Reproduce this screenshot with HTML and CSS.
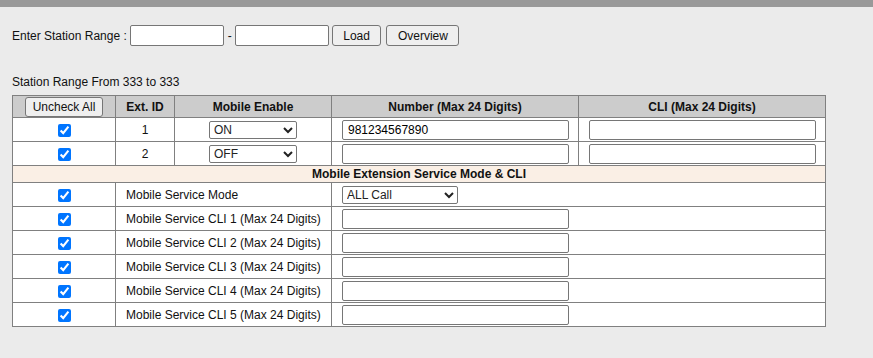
FILE: index.html
```html
<!DOCTYPE html>
<html lang="en">
<head>
  <meta charset="UTF-8" />
  <title>Mobile Extension</title>
  <link rel="stylesheet" href="styles.css">
</head>
<body>
  <div class="topbar"></div>
  <div class="page">
    <div class="range">
      <span>Enter Station Range :</span>
      <input type="text" class="range-input">
      <span class="dash">-</span>
      <input type="text" class="range-input">
      <button type="button" class="btn">Load</button>
      <button type="button" class="btn">Overview</button>
    </div>

    <div class="range-info">Station Range From 333 to 333</div>

    <table class="grid">
      <colgroup>
        <col class="c1"><col class="c2"><col class="c3"><col class="c4"><col class="c5">
      </colgroup>
      <thead>
        <tr>
          <th><button type="button" class="btn btn-small">Uncheck All</button></th>
          <th>Ext. ID</th>
          <th>Mobile Enable</th>
          <th>Number (Max 24 Digits)</th>
          <th>CLI (Max 24 Digits)</th>
        </tr>
      </thead>
      <tbody>
        <tr>
          <td class="center"><input type="checkbox" checked></td>
          <td class="center">1</td>
          <td class="center">
            <select class="sel-enable"><option>ON</option><option>OFF</option></select>
          </td>
          <td class="pad"><input type="text" class="field" value="981234567890"></td>
          <td class="pad"><input type="text" class="field"></td>
        </tr>
        <tr>
          <td class="center"><input type="checkbox" checked></td>
          <td class="center">2</td>
          <td class="center">
            <select class="sel-enable"><option>OFF</option><option>ON</option></select>
          </td>
          <td class="pad"><input type="text" class="field"></td>
          <td class="pad"><input type="text" class="field"></td>
        </tr>
        <tr class="section">
          <td colspan="5">Mobile Extension Service Mode &amp; CLI</td>
        </tr>
        <tr>
          <td class="center"><input type="checkbox" checked></td>
          <td colspan="2" class="label">Mobile Service Mode</td>
          <td colspan="2" class="pad">
            <select class="sel-mode"><option>ALL Call</option></select>
          </td>
        </tr>
        <tr>
          <td class="center"><input type="checkbox" checked></td>
          <td colspan="2" class="label">Mobile Service CLI 1 (Max 24 Digits)</td>
          <td colspan="2" class="pad"><input type="text" class="field"></td>
        </tr>
        <tr>
          <td class="center"><input type="checkbox" checked></td>
          <td colspan="2" class="label">Mobile Service CLI 2 (Max 24 Digits)</td>
          <td colspan="2" class="pad"><input type="text" class="field"></td>
        </tr>
        <tr>
          <td class="center"><input type="checkbox" checked></td>
          <td colspan="2" class="label">Mobile Service CLI 3 (Max 24 Digits)</td>
          <td colspan="2" class="pad"><input type="text" class="field"></td>
        </tr>
        <tr>
          <td class="center"><input type="checkbox" checked></td>
          <td colspan="2" class="label">Mobile Service CLI 4 (Max 24 Digits)</td>
          <td colspan="2" class="pad"><input type="text" class="field"></td>
        </tr>
        <tr>
          <td class="center"><input type="checkbox" checked></td>
          <td colspan="2" class="label">Mobile Service CLI 5 (Max 24 Digits)</td>
          <td colspan="2" class="pad"><input type="text" class="field"></td>
        </tr>
      </tbody>
    </table>
  </div>
</body>
</html>
```

FILE: styles.css
```css
body {
  margin: 0;
  background-color: #ebebeb;
  font-family: "Liberation Sans", Arial, sans-serif;
  font-size: 12px;
  color: #111;
}

.topbar {
  height: 7px;
  background-color: #999999;
}

.page {
  padding: 18px 12px 0 12px;
}

.range {
  display: flex;
  align-items: center;
  gap: 3px;
  height: 21px;
}

.range .dash {
  margin-left: 1px;
}

.range-input {
  width: 94px;
  height: 21px;
  box-sizing: border-box;
  margin: 0;
  border: 1px solid #767676;
  border-radius: 2px;
  background: white;
  font: inherit;
}

.btn {
  height: 21px;
  box-sizing: border-box;
  padding: 0 10.5px;
  border: 1px solid #767676;
  border-radius: 3px;
  background-color: #efefef;
  font: inherit;
  font-weight: normal;
  color: #111;
}

.range .btn:last-of-type {
  margin-left: 2px;
}

.btn-small {
  height: 20px;
  padding: 0 7px;
}

.range-info {
  margin-top: 29px;
  height: 20px;
  line-height: 14px;
}

.grid {
  width: 813px;
  border-collapse: collapse;
  table-layout: fixed;
  background-color: white;
  border: 1px solid #808080;
}

.c1 { width: 103px; }
.c2 { width: 59px; }
.c3 { width: 157px; }
.c4 { width: 247px; }
.c5 { width: 247px; }

.grid th {
  height: 21px;
  padding: 0;
  background-color: #cccccc;
  border: 1px solid #808080;
  font-weight: bold;
  text-align: center;
}

.grid td {
  height: 23px;
  padding: 0;
  border: 1px solid #808080;
}

.center {
  text-align: center;
}

.pad {
  padding-left: 10px !important;
}

.label {
  padding-left: 10px !important;
}

.section td {
  height: 16px;
  background-color: #faefe5;
  font-weight: bold;
  text-align: center;
  line-height: 14px;
}

.grid input[type="checkbox"] {
  width: 13px;
  height: 13px;
  margin: 0;
  vertical-align: middle;
  accent-color: #0075ff;
}

.field {
  display: block;
  width: 227px;
  height: 20px;
  box-sizing: border-box;
  border: 1px solid #767676;
  border-radius: 2px;
  padding: 0 5px;
  font: inherit;
}

.sel-enable,
.sel-mode {
  height: 18px;
  box-sizing: border-box;
  border: 1px solid #767676;
  border-radius: 2px;
  background-color: white;
  font: inherit;
  color: #222;
  vertical-align: middle;
}

.sel-enable {
  width: 88px;
}

.sel-mode {
  display: block;
  width: 116px;
}
```
